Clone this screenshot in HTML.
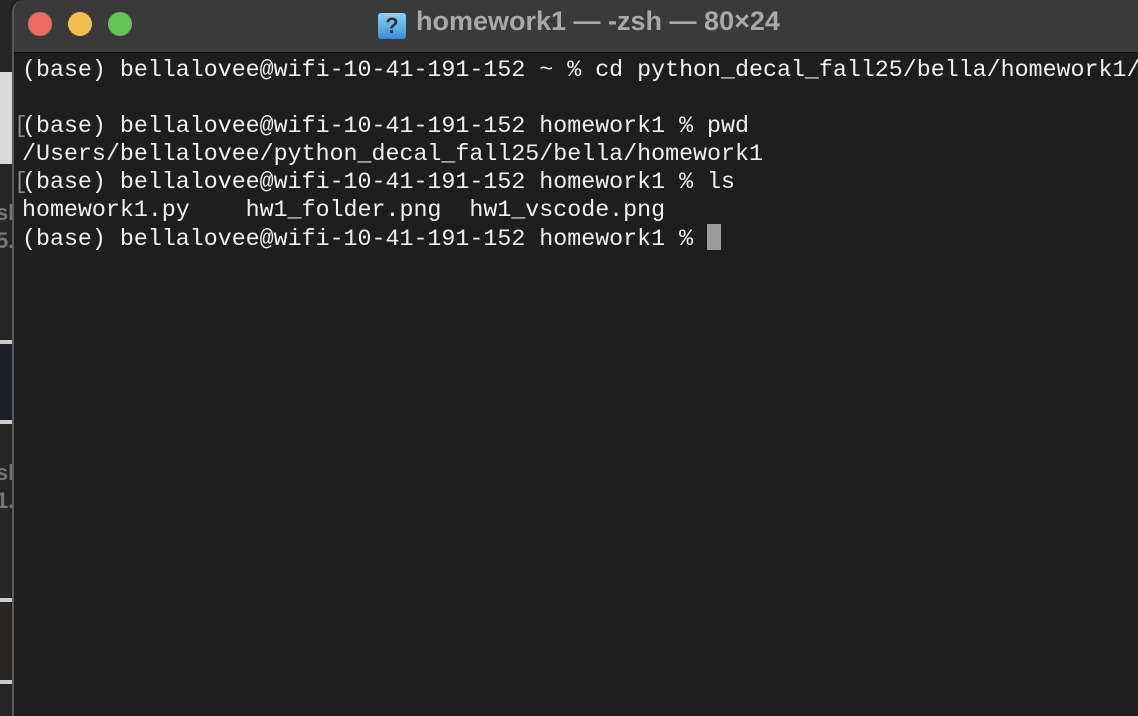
<!DOCTYPE html>
<html><head><style>
html,body{margin:0;padding:0;width:1138px;height:716px;overflow:hidden;background:#232323;}
.side{position:absolute;left:0;top:0;width:12px;height:716px;background:#262626;}
.win{position:absolute;left:12px;top:0;width:1126px;height:716px;background:#1e1e1e;border-left:2px solid #5a5a5a;border-top-left-radius:12px;overflow:hidden;}
.tb{position:absolute;left:0;top:0;right:0;height:52px;background:#3a3a3a;border-bottom:1px solid #111;}
.dot{position:absolute;top:12px;width:24px;height:24px;border-radius:50%;}
.title{position:absolute;left:364px;top:6px;font:bold 27px "Liberation Sans",sans-serif;color:#a9a9a9;white-space:nowrap;}
.icon{display:inline-block;width:28px;height:26px;background:linear-gradient(#8fd0f5,#3a8fd6);border-radius:3px;vertical-align:-3px;color:#333;font-size:22px;text-align:center;line-height:26px;margin-right:10px;}
pre{position:absolute;left:8px;top:56px;margin:0;font:23.3px/28px "Liberation Mono",monospace;color:#f0f0f0;}
.cur{display:inline-block;width:14px;height:26px;background:#9a9a9a;vertical-align:-5px;}
.br{position:absolute;left:14px;color:#888;font:23px/28px "Liberation Mono",monospace;}
.th{position:absolute;left:0;width:12px;background:#444;}
.gt{position:absolute;left:-4px;font:bold 22px "Liberation Sans",sans-serif;color:#777;}
</style></head><body>
<div class="side"></div>
<div class="th" style="top:72px;height:92px;background:#d8d8d8"></div>
<div class="th" style="top:340px;height:76px;background:#1a1e26;border-top:4px solid #ccc;border-bottom:4px solid #ccc"></div>
<div class="th" style="top:598px;height:78px;background:#2a2520;border-top:4px solid #ccc;border-bottom:4px solid #ccc"></div>
<div class="gt" style="top:200px">sl</div><div class="gt" style="top:228px">5.</div>
<div class="gt" style="top:460px">sl</div><div class="gt" style="top:488px">1.</div>
<div class="win">
<div class="tb">
<div class="dot" style="left:14px;background:#ec6a5e"></div>
<div class="dot" style="left:54px;background:#f4bf4f"></div>
<div class="dot" style="left:94px;background:#61c554"></div>
<div class="title"><span class="icon">?</span>homework1 — -zsh — 80×24</div>
</div>
<pre>(base) bellalovee@wifi-10-41-191-152 ~ % cd python_decal_fall25/bella/homework1/

(base) bellalovee@wifi-10-41-191-152 homework1 % pwd
/Users/bellalovee/python_decal_fall25/bella/homework1
(base) bellalovee@wifi-10-41-191-152 homework1 % ls
homework1.py    hw1_folder.png  hw1_vscode.png
(base) bellalovee@wifi-10-41-191-152 homework1 % <span class="cur"></span></pre>
</div>
<div class="br" style="top:112px">[</div>
<div class="br" style="top:168px">[</div>
</body></html>
